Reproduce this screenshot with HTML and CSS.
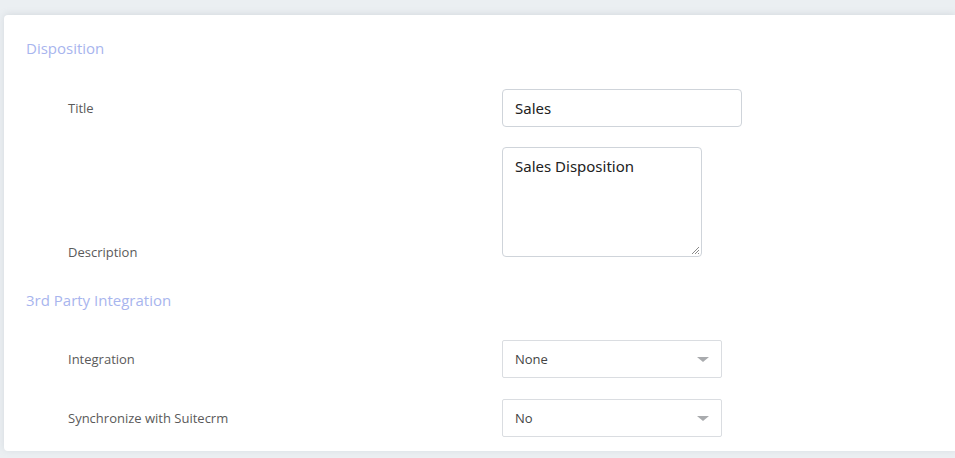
FILE: index.html
```html
<!DOCTYPE html>
<html>
<head>
<meta charset="utf-8">
<link rel="stylesheet" href="styles.css">
</head>
<body>
<div class="card">
  <div class="section-title">Disposition</div>
  <div class="row first">
    <label class="label">Title</label>
    <div class="input">Sales</div>
  </div>
  <div class="row bottom">
    <label class="label">Description</label>
    <div class="textarea">Sales Disposition
      <svg class="grip" width="10" height="10" viewBox="0 0 10 10"><path d="M9 2 L2 9 M9 5 L5 9 M9 8 L8 9" stroke="#8a8a8a" stroke-width="1"/></svg>
    </div>
  </div>
  <div class="section-title second">3rd Party Integration</div>
  <div class="row first second-first">
    <label class="label">Integration</label>
    <div class="select">None<span class="caret"></span></div>
  </div>
  <div class="row">
    <label class="label">Synchronize with Suitecrm</label>
    <div class="select">No<span class="caret"></span></div>
  </div>
</div>
</body>
</html>
```
FILE: styles.css
```css
html, body {
  margin: 0;
  padding: 0;
  background: #ebeff2;
  overflow: hidden;
  width: 955px;
  height: 458px;
}
body {
  font-family: "Open Sans", sans-serif;
}
.card {
  margin: 15px 0 0 4px;
  height: 436px;
  box-sizing: border-box;
  background: #fff;
  border-radius: 4px 0 0 4px;
  box-shadow: 0 -1px 6px rgba(150, 160, 170, 0.25);
  padding: 23px 0 0 22px;
}
.section-title {
  font-size: 15px;
  line-height: 20px;
  color: #a8b5ee;
}
.section-title.second {
  margin-top: 33px;
}
.row {
  display: grid;
  grid-template-columns: 434px auto;
  align-items: center;
  padding-left: 42px;
  margin-top: 21px;
}
.row.first {
  margin-top: 31px;
}
.row.second-first {
  margin-top: 30px;
}
.row.bottom {
  align-items: end;
  margin-top: 20px;
}
.row.bottom .label {
  margin-bottom: -4px;
}
.label {
  font-size: 13px;
  color: #5a5a5a;
  line-height: 18px;
}
.input {
  width: 240px;
  height: 38px;
  box-sizing: border-box;
  border: 1px solid #cfd4da;
  border-radius: 4px;
  padding: 0 12px;
  font-family: "Noto Sans", sans-serif;
  font-size: 15px;
  line-height: 36px;
  color: #222;
}
.textarea {
  position: relative;
  width: 200px;
  height: 110px;
  box-sizing: border-box;
  border: 1px solid #cfd4da;
  border-radius: 4px;
  padding: 7px 12px;
  font-family: "Noto Sans", sans-serif;
  font-size: 15px;
  line-height: 22px;
  color: #222;
}
.grip {
  position: absolute;
  right: 1px;
  bottom: 1px;
}
.select {
  position: relative;
  width: 220px;
  height: 38px;
  box-sizing: border-box;
  border: 1px solid #dadde1;
  border-radius: 2px;
  padding: 0 12px;
  font-size: 13px;
  line-height: 36px;
  color: #444;
}
.caret {
  position: absolute;
  right: 12px;
  top: 16px;
  width: 0;
  height: 0;
  border-left: 6px solid transparent;
  border-right: 6px solid transparent;
  border-top: 5px solid #a9abae;
}
```
